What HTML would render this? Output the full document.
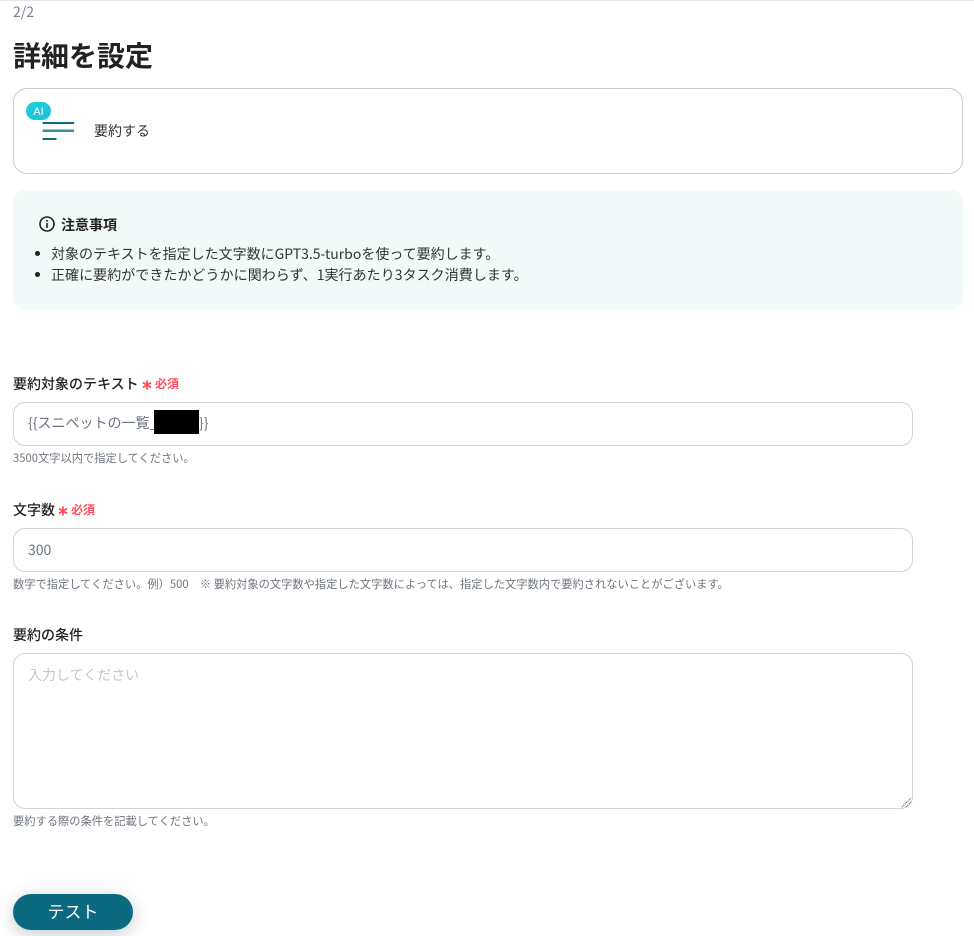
<!DOCTYPE html>
<html lang="ja">
<head>
<meta charset="utf-8">
<style>
html,body{margin:0;padding:0;background:#fff;}
body{width:974px;height:936px;position:relative;overflow:hidden;font-family:"Noto Sans CJK JP","Liberation Sans",sans-serif;color:#2b2b2b;}
.a{position:absolute;white-space:nowrap;}
.box{position:absolute;box-sizing:border-box;background:#fff;border:1px solid #d0d4da;border-radius:12px;}
.lab{font-size:14px;font-weight:500;line-height:18px;color:#222;}
.req{color:#ff4d5e;font-size:12px;font-weight:700;line-height:18px;}
.hint{font-size:11.25px;line-height:14px;color:#6f767e;}
.val{font-size:14px;line-height:20px;color:#6b7280;}
</style>
</head>
<body>
<div class="a" style="left:0;top:0;width:974px;height:1px;background:#e3e6f0;"></div>
<div class="a" style="left:13px;top:3px;font-size:14px;line-height:18px;color:#7a7f85;">2/2</div>
<div class="a" style="left:13px;top:38px;font-size:28px;font-weight:700;line-height:34px;color:#222;">詳細を設定</div>

<div class="box" style="left:13px;top:88px;width:950px;height:86px;border-radius:14px;border-color:#cccccc;"></div>
<svg class="a" style="left:26px;top:101px;" width="50" height="42" viewBox="0 0 50 42">
<defs><linearGradient id="g" x1="0" y1="0" x2="1" y2="1"><stop offset="0" stop-color="#1fd0d8"/><stop offset="1" stop-color="#1fbfe0"/></linearGradient></defs>
<rect x="16.5" y="21" width="31.5" height="2" fill="#0f6b84"/>
<rect x="16.5" y="28.5" width="31.5" height="2.5" fill="#3f8ba0"/>
<rect x="16.5" y="37" width="14" height="2" fill="#0f6b84"/>
<rect x="0" y="1" width="25" height="18" rx="9" fill="url(#g)"/>
<text x="12.5" y="14" font-size="11" fill="#fff" text-anchor="middle" font-family="Liberation Sans">AI</text>
</svg>
<div class="a" style="left:94px;top:121px;font-size:14px;line-height:20px;color:#333;">要約する</div>

<div class="a" style="left:13px;top:190px;width:950px;height:119px;background:#f1faf9;border-radius:12px;"></div>
<svg class="a" style="left:38px;top:215px;" width="18" height="18" viewBox="0 0 18 18">
<circle cx="9" cy="9" r="7" fill="none" stroke="#222" stroke-width="1.6"/>
<rect x="8.2" y="8" width="1.6" height="5" fill="#222"/>
<rect x="8.2" y="5" width="1.6" height="1.7" fill="#222"/>
</svg>
<div class="a" style="left:61px;top:215px;font-size:14px;font-weight:700;line-height:20px;color:#222;">注意事項</div>
<div class="a" style="left:35px;top:251px;width:5px;height:5px;border-radius:50%;background:#222;"></div>
<div class="a" style="left:35px;top:272px;width:5px;height:5px;border-radius:50%;background:#222;"></div>
<div class="a" style="left:51px;top:244px;font-size:14px;line-height:20px;color:#333;">対象のテキストを指定した文字数にGPT3.5-turboを使って要約します。</div>
<div class="a" style="left:51px;top:265px;font-size:14px;line-height:20px;color:#333;letter-spacing:.05px;">正確に要約ができたかどうかに関わらず、1実行あたり3タスク消費します。</div>

<div class="a lab" style="left:13px;top:375px;">要約対象のテキスト</div>
<svg class="a" style="left:142px;top:380px;" width="10" height="10" viewBox="0 0 10 10"><path d="M5 .5V9.5M1 2.7L9 7.3M9 2.7L1 7.3" stroke="#ff4d5e" stroke-width="1.8" fill="none"/></svg>
<div class="a req" style="left:155px;top:375px;">必須</div>
<div class="box" style="left:13px;top:402px;width:900px;height:44px;"></div>
<div class="a val" style="left:28px;top:413px;">{{スニペットの一覧_</div>
<div class="a" style="left:154px;top:410px;width:45px;height:24px;background:#000;"></div>
<div class="a val" style="left:199px;top:413px;">}}</div>
<div class="a hint" style="left:13px;top:451px;">3500文字以内で指定してください。</div>

<div class="a lab" style="left:13px;top:501px;">文字数</div>
<svg class="a" style="left:58px;top:506px;" width="10" height="10" viewBox="0 0 10 10"><path d="M5 .5V9.5M1 2.7L9 7.3M9 2.7L1 7.3" stroke="#ff4d5e" stroke-width="1.8" fill="none"/></svg>
<div class="a req" style="left:71px;top:501px;">必須</div>
<div class="box" style="left:13px;top:528px;width:900px;height:44px;"></div>
<div class="a val" style="left:28px;top:540px;">300</div>
<div class="a hint" style="left:13px;top:577px;">数字で指定してください。例）500　※ 要約対象の文字数や指定した文字数によっては、指定した文字数内で要約されないことがございます。</div>

<div class="a lab" style="left:13px;top:626px;">要約の条件</div>
<div class="box" style="left:13px;top:653px;width:900px;height:156px;"></div>
<div class="a" style="left:28px;top:665px;font-size:14px;line-height:20px;color:#c4c7cb;">入力してください</div>
<svg class="a" style="left:901px;top:797px;" width="11" height="11" viewBox="0 0 11 11"><path d="M1 10L10 1M5 10L10 5" stroke="#555" stroke-width="1" stroke-dasharray="1 1" fill="none"/></svg>
<div class="a hint" style="left:13px;top:814px;">要約する際の条件を記載してください。</div>

<div class="a" style="left:13px;top:894px;width:120px;height:36px;border-radius:18px;background:#0b6980;box-shadow:0 4px 16px rgba(60,80,100,.3);color:#fff;font-size:17px;line-height:34px;text-align:center;">テスト</div>
</body>
</html>
